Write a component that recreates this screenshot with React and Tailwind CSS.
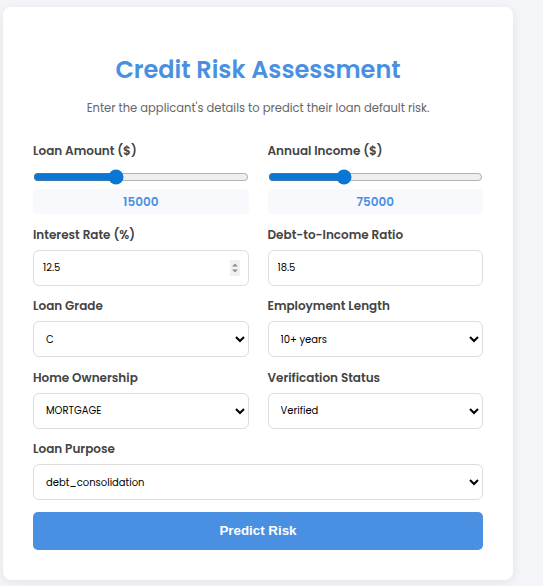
import { useState } from 'react'

const font = { fontFamily: 'Poppins, "Open Sans", sans-serif' }

function Label({ children }) {
  return (
    <label className="block text-[12px] leading-[18px] font-semibold text-[#444] mb-[6px]">
      {children}
    </label>
  )
}

function Slider({ label, min, max, value, onChange }) {
  return (
    <div>
      <Label>{label}</Label>
      <input
        type="range"
        min={min}
        max={max}
        value={value}
        onChange={(e) => onChange(e.target.value)}
        className="block w-full h-4 mt-[9px] accent-[#0b77d4]"
      />
      <div className="mt-[4px] h-[25px] rounded-[4px] bg-[#f7f9fc] flex items-center justify-center text-[12px] font-semibold text-[#4a90e2]">
        {value}
      </div>
    </div>
  )
}

function Select({ label, value, options }) {
  return (
    <div>
      <Label>{label}</Label>
      <select
        defaultValue={value}
        className="block w-full h-[36px] px-[8px] rounded-[6px] border border-[#ddd] bg-white text-[10px] text-black"
      >
        {options.map((o) => (
          <option key={o}>{o}</option>
        ))}
      </select>
    </div>
  )
}

export default function App() {
  const [amount, setAmount] = useState(15000)
  const [income, setIncome] = useState(75000)

  return (
    <div className="min-h-[586px] bg-[#f4f5f9] pt-[7px] pl-[3px]" style={font}>
      <div className="w-[510px] bg-white rounded-[8px] shadow-[0_2px_10px_rgba(0,0,0,0.08)] px-[30px] pt-[47px] pb-[30px]">
        <h1 className="text-center text-[24px] leading-8 font-semibold text-[#4a90e2]">
          Credit Risk Assessment
        </h1>
        <p className="text-center text-[11.5px] leading-[18px] text-[#666] mt-[13px] mb-[25px]">
          Enter the applicant's details to predict their loan default risk.
        </p>

        <div className="grid grid-cols-2 gap-x-[19px] gap-y-[11.5px]">
          <Slider label="Loan Amount ($)" min={0} max={40000} value={amount} onChange={setAmount} />
          <Slider label="Annual Income ($)" min={10000} max={200000} value={income} onChange={setIncome} />

          <div>
            <Label>Interest Rate (%)</Label>
            <div className="relative">
              <input
                type="text"
                defaultValue="12.5"
                className="block w-full h-[36px] px-[9px] rounded-[6px] border border-[#ddd] text-[10px] text-black"
              />
              {/* spin buttons */}
              <svg
                className="absolute right-[9px] top-[10px]"
                width="10"
                height="16"
                viewBox="0 0 10 16"
              >
                <rect width="10" height="16" fill="#f1f1f1" />
                <polygon points="5,3.5 8,6.5 2,6.5" fill="#8f8f8f" />
                <polygon points="5,12.5 8,9.5 2,9.5" fill="#8f8f8f" />
              </svg>
            </div>
          </div>
          <div>
            <Label>Debt-to-Income Ratio</Label>
            <input
              type="text"
              defaultValue="18.5"
              className="block w-full h-[36px] px-[9px] rounded-[6px] border border-[#ddd] text-[10px] text-black"
            />
          </div>

          <Select label="Loan Grade" value="C" options={['A', 'B', 'C', 'D', 'E', 'F', 'G']} />
          <Select
            label="Employment Length"
            value="10+ years"
            options={['< 1 year', '1 year', '2 years', '5 years', '10+ years']}
          />

          <Select label="Home Ownership" value="MORTGAGE" options={['RENT', 'OWN', 'MORTGAGE', 'OTHER']} />
          <Select
            label="Verification Status"
            value="Verified"
            options={['Not Verified', 'Source Verified', 'Verified']}
          />

          <div className="col-span-2">
            <Select
              label="Loan Purpose"
              value="debt_consolidation"
              options={['credit_card', 'debt_consolidation', 'home_improvement', 'other']}
            />
          </div>

          <button
            className="col-span-2 h-[38px] mt-[0.5px] rounded-[5px] bg-[#4a90e2] text-white text-[13.333px] font-bold"
            style={{ fontFamily: '"Liberation Sans", Arial, sans-serif' }}
          >
            Predict Risk
          </button>
        </div>
      </div>
    </div>
  )
}
